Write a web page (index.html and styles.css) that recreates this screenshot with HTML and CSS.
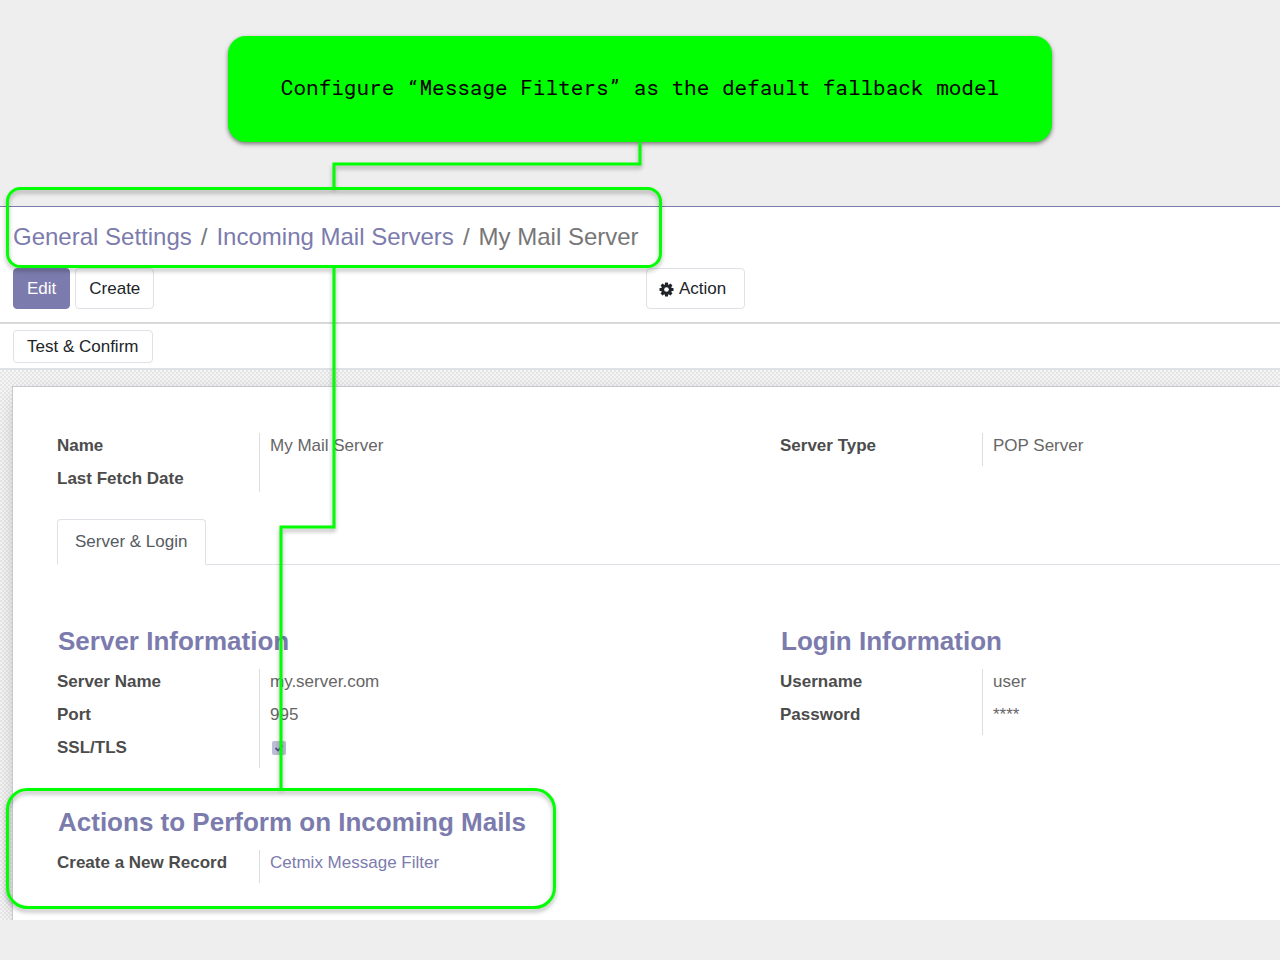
FILE: index.html
```
<!DOCTYPE html>
<html lang="en">
<head>
<meta charset="utf-8">
<meta name="viewport" content="width=device-width, initial-scale=1">
<title>My Mail Server</title>
<link rel="stylesheet" href="styles.css">
</head>
<body>
<div class="slide">
  <header class="banner">
    <p class="callout">Configure “Message Filters” as the default fallback model</p>
  </header>

  <main class="app">
    <div class="control-panel">
      <nav class="breadcrumb" aria-label="Breadcrumb">
        <a href="#">General Settings</a><span class="sep">/</span><a href="#">Incoming Mail Servers</a><span class="sep">/</span><span>My Mail Server</span>
      </nav>
      <div class="toolbar">
        <div class="toolbar-main">
          <button class="btn btn-primary" type="button">Edit</button>
          <button class="btn" type="button">Create</button>
        </div>
        <button class="btn btn-action" type="button">
          <svg class="gear" viewBox="0 0 16 16" aria-hidden="true">
            <g fill="currentColor">
              <rect x="6.3" y="0.5" width="3.4" height="15" rx="0.6"/>
              <rect x="6.3" y="0.5" width="3.4" height="15" rx="0.6" transform="rotate(45 8 8)"/>
              <rect x="6.3" y="0.5" width="3.4" height="15" rx="0.6" transform="rotate(90 8 8)"/>
              <rect x="6.3" y="0.5" width="3.4" height="15" rx="0.6" transform="rotate(135 8 8)"/>
              <circle cx="8" cy="8" r="5.7"/>
            </g>
            <circle cx="8" cy="8" r="2.5" fill="#fff"/>
          </svg>
          Action
        </button>
      </div>
    </div>

    <div class="statusbar">
      <button class="btn btn-small" type="button">Test &amp; Confirm</button>
    </div>

    <div class="form-view">
      <section class="sheet">
        <div class="columns">
          <dl class="fields">
            <dt>Name</dt><dd>My Mail Server</dd>
            <dt>Last Fetch Date</dt><dd></dd>
          </dl>
          <dl class="fields">
            <dt>Server Type</dt><dd>POP Server</dd>
          </dl>
        </div>

        <div class="tabs" role="tablist">
          <button class="tab" type="button" role="tab" aria-selected="true">Server &amp; Login</button>
        </div>

        <div class="columns groups">
          <section>
            <h2>Server Information</h2>
            <dl class="fields">
              <dt>Server Name</dt><dd>my.server.com</dd>
              <dt>Port</dt><dd>995</dd>
              <dt><label for="ssl">SSL/TLS</label></dt><dd><input class="check" id="ssl" type="checkbox" checked disabled></dd>
            </dl>
          </section>
          <section>
            <h2>Login Information</h2>
            <dl class="fields">
              <dt>Username</dt><dd>user</dd>
              <dt>Password</dt><dd>****</dd>
            </dl>
          </section>
          <section>
            <h2>Actions to Perform on Incoming Mails</h2>
            <dl class="fields">
              <dt>Create a New Record</dt><dd><a href="#">Cetmix Message Filter</a></dd>
            </dl>
          </section>
        </div>
      </section>
    </div>
  </main>

  <svg class="annotations" width="1280" height="960" viewBox="0 0 1280 960" aria-hidden="true">
    <g class="stroke">
      <path d="M640 141V164H334V188"/>
      <path d="M334 267V527H281V789"/>
      <rect x="7.500" y="188.500" width="653" height="78" rx="13"/>
      <rect x="7.500" y="789.500" width="547" height="118" rx="20"/>
    </g>
  </svg>
</div>
</body>
</html>
```
FILE: styles.css
```
* { box-sizing: border-box; }

body {
  margin: 0;
  background: #eee;
  color: #4c4c4c;
  font: 17px/20px "Liberation Sans", Arial, sans-serif;
}

a { color: #7c7bad; text-decoration: none; }
dl, dd, h2, p { margin: 0; }

.slide {
  position: relative;
  padding-bottom: 40px;
  overflow: hidden;
}

.banner { padding: 36px 16px 64px; }

.callout {
  width: 824px;
  max-width: 100%;
  margin: 0 auto;
  padding: 38px 40px 42px;
  border-radius: 18px;
  background: #0f0;
  box-shadow: 0 2px 4px rgba(0, 0, 0, 0.5);
  color: #000;
  font: 21px/26px "Roboto Mono", "DejaVu Sans Mono", monospace;
  text-align: center;
}

.app {
  border-top: 1px solid #7c7bad;
  background: #fff;
}

.control-panel {
  padding: 15px 13px 13px;
  border-bottom: 2px solid #d9d9d9;
}

.breadcrumb {
  color: #777;
  font-size: 24px;
  line-height: 30px;
}

.sep { padding: 0 9px; }

.toolbar {
  display: grid;
  grid-template-columns: 633px 1fr;
  margin-top: 16px;
}

.toolbar-main { display: flex; gap: 5px; }

.btn {
  padding: 10px 13px 9px;
  border: 1px solid #dee2e6;
  border-radius: 4px;
  background: #fff;
  color: #212529;
  font: inherit;
}

.btn-primary {
  border-color: #7c7bad;
  background: #7c7bad;
  color: #fff;
}

.btn-action {
  display: flex;
  align-items: center;
  justify-self: start;
  gap: 5px;
  padding-right: 18px;
  padding-left: 12px;
}

.gear { width: 15px; height: 15px; }

.statusbar {
  padding: 6px 13px 5px;
  border-bottom: 2px solid #dee2e6;
}

.btn-small { padding: 6px 14px 5px 13px; }

.form-view {
  padding: 16px 0 0 12px;
  overflow: hidden;
  background: repeating-conic-gradient(#e6e6e6 0 25%, #f5f5f5 0 50%) 0 0 / 4px 4px;
}

.sheet {
  padding: 46px 0 37px 44px;
  border: solid #c8c8d3;
  border-width: 1px 0 0 1px;
  background: #fff;
  box-shadow: 0 5px 20px -10px rgba(0, 0, 0, 0.5);
}

.columns {
  display: grid;
  grid-template-columns: 723px 1fr;
  align-items: start;
}

.fields {
  display: grid;
  grid-template-columns: 202px 1fr;
}

.fields dt {
  padding: 3px 0;
  font-weight: bold;
}

.fields dd {
  min-height: 26px;
  padding: 3px 0 10px 10px;
  border-left: 1px solid #ddd;
  color: #666;
}

.fields dd:empty { padding: 0; }

.tabs {
  display: flex;
  margin-top: 27px;
  border-bottom: 1px solid #dee2e6;
}

.tab {
  margin-bottom: -1px;
  padding: 12px 18px 12px 17px;
  border: 1px solid #dee2e6;
  border-bottom-color: #fff;
  border-radius: 4px 4px 0 0;
  background: #fff;
  color: #555b62;
  font: inherit;
}

.groups {
  margin-top: 60px;
  row-gap: 38px;
}

h2 {
  padding: 0 0 12px 1px;
  color: #7c7bad;
  font-size: 26px;
  line-height: 32px;
}

.check {
  display: block;
  width: 14px;
  height: 14px;
  margin: 3px 0 3px 2px;
  appearance: none;
  border-radius: 2px;
  background: #bebdd6 url("data:image/svg+xml,%3Csvg xmlns='http://www.w3.org/2000/svg' viewBox='0 0 14 14'%3E%3Cpath d='M3.500 7l2.500 2.500 4.500-5' fill='none' stroke='%2355548f' stroke-width='1.800'/%3E%3C/svg%3E");
}

.annotations {
  position: absolute;
  top: 0;
  left: 0;
  pointer-events: none;
}

.stroke {
  fill: none;
  stroke: #0f0;
  stroke-width: 3px;
  filter: drop-shadow(0 3px 2px rgba(0, 0, 0, 0.3));
}
```
